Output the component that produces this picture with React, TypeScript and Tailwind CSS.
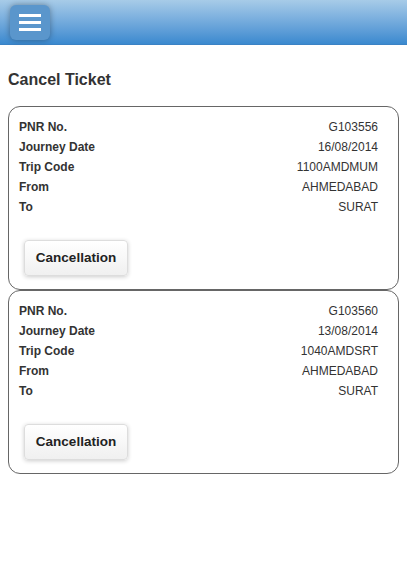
import React from "react";

const tickets = [
  { pnr: "G103556", date: "16/08/2014", trip: "1100AMDMUM", from: "AHMEDABAD", to: "SURAT" },
  { pnr: "G103560", date: "13/08/2014", trip: "1040AMDSRT", from: "AHMEDABAD", to: "SURAT" },
];

function TicketCard({ t }: { t: (typeof tickets)[number] }) {
  const rows = [
    ["PNR No.", t.pnr],
    ["Journey Date", t.date],
    ["Trip Code", t.trip],
    ["From", t.from],
    ["To", t.to],
  ];
  return (
    <div className="rounded-[12px] border border-[#666] bg-white pl-[10px] pr-[20px] pt-[10px] pb-[13px]">
      <div className="flex flex-col">
        {rows.map(([label, value]) => (
          <div key={label} className="flex h-[20px] items-center justify-between text-[12px] text-[#333]">
            <span className="font-bold">{label}</span>
            <span>{value}</span>
          </div>
        ))}
      </div>
      <button className="mt-[23px] ml-[5px] h-[36px] w-[104px] rounded-[4px] border border-[#ddd] bg-gradient-to-b from-white to-[#f0f0f0] text-[13.5px] font-bold text-[#222] shadow-[0_1px_4px_rgba(0,0,0,0.2)]">
        Cancellation
      </button>
    </div>
  );
}

export default function App() {
  return (
    <div className="min-h-[571px] bg-white font-['Liberation_Sans',Arial,sans-serif]">
      <div className="flex h-[45px] items-start border-b border-[#3b82c4] bg-gradient-to-b from-[#a7cbe8] to-[#3a89cf] pl-[10px] pt-[5px]">
        <div className="flex h-[35px] w-[40px] flex-col items-center justify-center gap-[4px] rounded-[6px] bg-[#5a96cc] shadow-[0_0_6px_rgba(0,0,0,0.35)]">
          <span className="h-[3px] w-[22px] bg-white" />
          <span className="h-[3px] w-[22px] bg-white" />
          <span className="h-[3px] w-[22px] bg-white" />
        </div>
      </div>
      <div className="px-[8px]">
        <h1 className="mt-[25px] mb-[16px] text-[16px] font-bold leading-[20px] text-[#333]">Cancel Ticket</h1>
        <div className="flex flex-col">
          {tickets.map((t) => (
            <TicketCard key={t.pnr} t={t} />
          ))}
        </div>
      </div>
    </div>
  );
}
